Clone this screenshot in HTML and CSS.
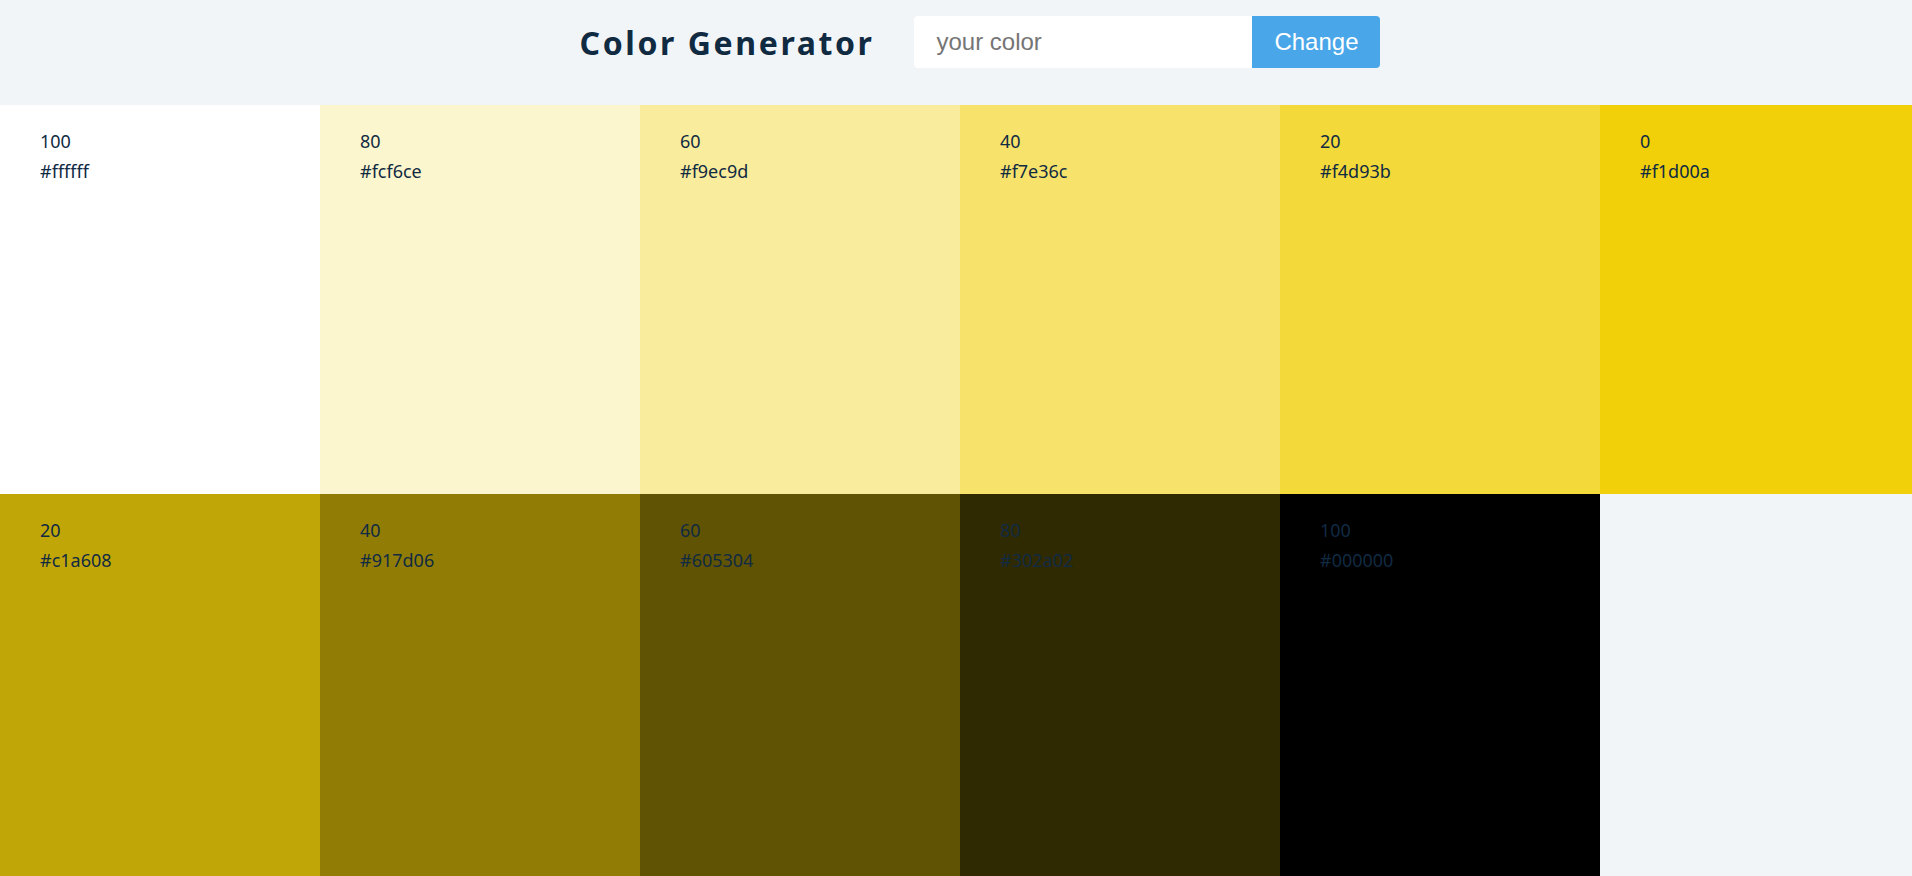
FILE: index.html
```html
<!DOCTYPE html>
<html lang="en">
<head>
<meta charset="utf-8">
<title>Color Generator</title>
<link rel="stylesheet" href="styles.css">
</head>
<body>
<section class="container">
  <h3 class="title">Color Generator</h3>
  <form class="form">
    <input type="text" class="color-input" placeholder="your color">
    <button type="submit" class="btn">Change</button>
  </form>
</section>
<section class="colors">
  <article class="color" style="background-color: #ffffff"><p class="percent">100</p><p class="hex">#ffffff</p></article>
  <article class="color" style="background-color: #fcf6ce"><p class="percent">80</p><p class="hex">#fcf6ce</p></article>
  <article class="color" style="background-color: #f9ec9d"><p class="percent">60</p><p class="hex">#f9ec9d</p></article>
  <article class="color" style="background-color: #f7e36c"><p class="percent">40</p><p class="hex">#f7e36c</p></article>
  <article class="color" style="background-color: #f4d93b"><p class="percent">20</p><p class="hex">#f4d93b</p></article>
  <article class="color" style="background-color: #f1d00a"><p class="percent">0</p><p class="hex">#f1d00a</p></article>
  <article class="color" style="background-color: #c1a608"><p class="percent">20</p><p class="hex">#c1a608</p></article>
  <article class="color" style="background-color: #917d06"><p class="percent">40</p><p class="hex">#917d06</p></article>
  <article class="color" style="background-color: #605304"><p class="percent">60</p><p class="hex">#605304</p></article>
  <article class="color" style="background-color: #302a02"><p class="percent">80</p><p class="hex">#302a02</p></article>
  <article class="color" style="background-color: #000000"><p class="percent">100</p><p class="hex">#000000</p></article>
</section>
</body>
</html>
```
FILE: styles.css
```css
* { box-sizing: border-box; }
body {
  margin: 0;
  background: #f1f5f8;
  color: #102a42;
  font-family: "Noto Sans", "Open Sans", sans-serif;
}
.container {
  height: 105px;
  display: flex;
  align-items: center;
  justify-content: center;
  padding: 0 0 21px 48px;
}
.title {
  margin: 0 40px 0 0;
  font-size: 32px;
  font-weight: 700;
  letter-spacing: 2.6px;
  color: #102a42;
}
.form {
  display: flex;
  margin: 0;
}
.color-input {
  width: 338px;
  height: 52px;
  border: none;
  border-radius: 4px 0 0 4px;
  padding: 0 22px;
  font-family: "Liberation Sans", Arial, sans-serif;
  font-size: 24px;
  background: #ffffff;
  color: #222;
  outline: none;
}
.color-input::placeholder { color: #757575; }
.btn {
  width: 128px;
  height: 52px;
  border: none;
  border-radius: 0 4px 4px 0;
  background: #49a6e9;
  color: #ffffff;
  font-family: "Liberation Sans", Arial, sans-serif;
  font-size: 24px;
  padding: 0;
}
.colors {
  display: grid;
  grid-template-columns: repeat(5, 320px) 1fr;
  grid-auto-rows: 389px;
}
.color {
  padding: 21px 40px;
  font-size: 18px;
  line-height: 30px;
}
.color p { margin: 0; }
```
